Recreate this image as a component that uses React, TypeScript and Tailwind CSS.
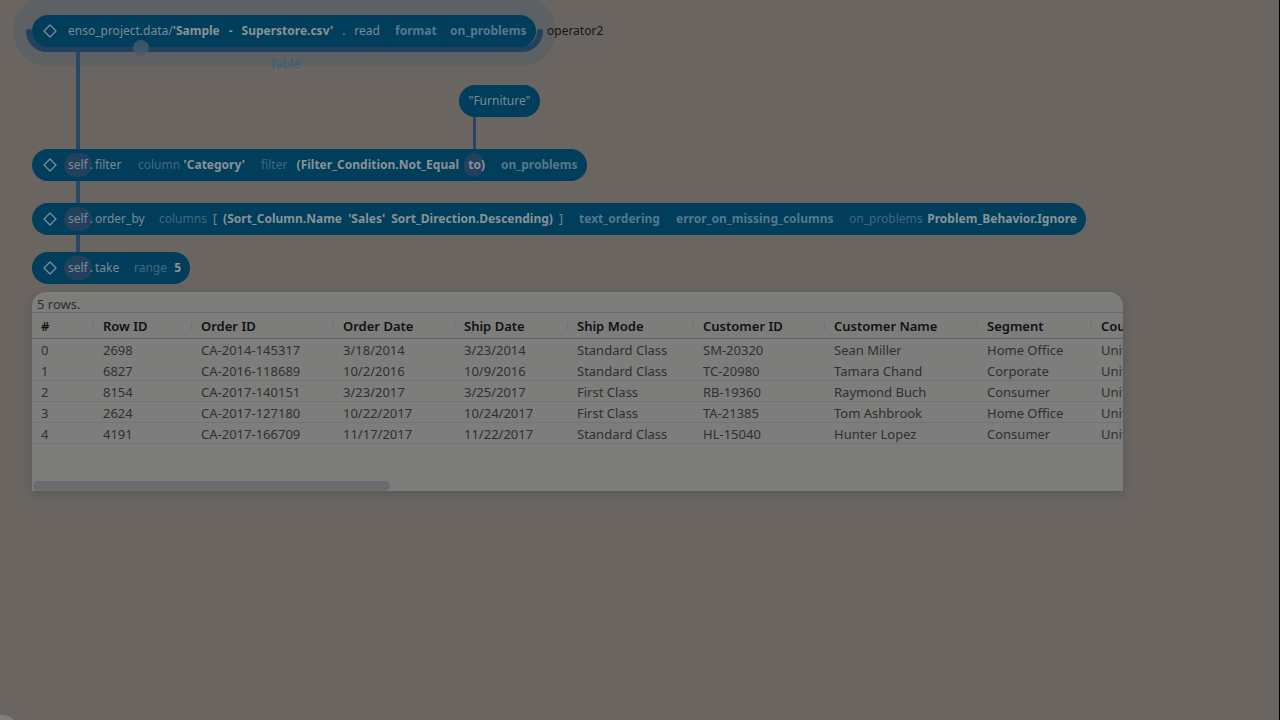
import type { ReactNode } from "react";

const columns = [
  { label: "#", width: "w-[62px]" },
  { label: "Row ID", width: "w-[98px]" },
  { label: "Order ID", width: "w-[142px]" },
  { label: "Order Date", width: "w-[121px]" },
  { label: "Ship Date", width: "w-[113px]" },
  { label: "Ship Mode", width: "w-[126px]" },
  { label: "Customer ID", width: "w-[131px]" },
  { label: "Customer Name", width: "w-[153px]" },
  { label: "Segment", width: "w-[114px]" },
  { label: "Country", width: "w-[120px]" },
];

const rows = [
  ["0", "2698", "CA-2014-145317", "3/18/2014", "3/23/2014", "Standard Class", "SM-20320", "Sean Miller", "Home Office", "United States"],
  ["1", "6827", "CA-2016-118689", "10/2/2016", "10/9/2016", "Standard Class", "TC-20980", "Tamara Chand", "Corporate", "United States"],
  ["2", "8154", "CA-2017-140151", "3/23/2017", "3/25/2017", "First Class", "RB-19360", "Raymond Buch", "Consumer", "United States"],
  ["3", "2624", "CA-2017-127180", "10/22/2017", "10/24/2017", "First Class", "TA-21385", "Tom Ashbrook", "Home Office", "United States"],
  ["4", "4191", "CA-2017-166709", "11/17/2017", "11/22/2017", "Standard Class", "HL-15040", "Hunter Lopez", "Consumer", "United States"],
];

function Diamond() {
  return (
    <svg viewBox="0 0 14 14" className="mr-[11px] size-[14px] shrink-0" fill="none" stroke="#7f8c91" strokeWidth="1.3" strokeLinejoin="round" aria-hidden="true">
      <path d="M7 1 13 7 7 13 1 7Z" />
    </svg>
  );
}

function Node({ place, children }: { place: string; children: ReactNode }) {
  return (
    <div className={`absolute flex h-8 items-center rounded-full bg-[#003e5c] pl-[11px] whitespace-nowrap text-[#7c8b92] ${place}`}>
      <Diamond />
      {children}
    </div>
  );
}

function Segment({ width, children }: { width: string; children: ReactNode }) {
  return <span className={`flex h-full shrink-0 items-center justify-between border-l border-[#003b58] pl-[7px] ${width}`}>{children}</span>;
}

function SelfCall({ method }: { method: string }) {
  return (
    <span className="flex flex-1 gap-0.5">
      <span className="relative">
        <span className="absolute -inset-x-1 top-1/2 h-6 -translate-y-1/2 rounded-full bg-[#23405f]" />
        <span className="relative">self</span>
      </span>
      <span className="relative">.</span>
      <span className="relative">{method}</span>
    </span>
  );
}

const dim = "text-[#43697c]";
const soft = "font-bold text-[#56788a]";
const strong = "font-bold text-[#8a9294]";

export default function App() {
  return (
    <main className="relative min-h-screen w-full overflow-hidden border-r border-black bg-[#6a6561] font-['Noto_Sans',sans-serif] text-[12px] leading-4">
      <div className="absolute top-[-4px] left-[13px] h-[70px] w-[543px] rounded-full bg-[#5e6163]" />
      <svg className="absolute top-2 left-[26px] h-[45px] w-[517px]" viewBox="0 0 517 45" fill="none" stroke="#23405f" strokeWidth="6" strokeLinecap="round" aria-hidden="true">
        <path d="M3 24a18 18 0 0 0 18 17H496a18 18 0 0 0 18-17" />
      </svg>
      <div className="absolute top-[52px] left-[76px] h-[210px] w-1 bg-[#2a4665]" />
      <div className="absolute top-[116px] left-[473px] h-[36px] w-[3px] bg-[#2a4665]" />

      <Node place="top-[15px] left-8 w-[504px]">
        <span className="flex flex-1 items-center justify-between pr-[7px]">
          <span>enso_project.data/<b className={strong}>'Sample</b></span>
          <b className={strong}>-</b>
          <b className={strong}>Superstore.csv'</b>
          <span>.</span>
          <span>read</span>
        </span>
        <Segment width="w-[55px]"><b className={soft}>format</b></Segment>
        <Segment width="w-[94px]"><b className={soft}>on_problems</b></Segment>
      </Node>
      <span className="absolute top-[23px] left-[547px] text-[#151515]">operator2</span>
      <span className="absolute top-14 left-[270px] text-[#365d7c]">Table</span>
      <span className="absolute top-10 left-[133px] size-4 rounded-full bg-[#4c5961]/80" />

      <div className="absolute top-[85px] left-[459px] flex h-8 w-[81px] items-center justify-center rounded-full bg-[#003e5c] text-[#7c8b92]">"Furniture"</div>

      <Node place="top-[149px] left-8 w-[555px]">
        <SelfCall method="filter" />
        <Segment width="w-[123px] pr-2"><span className={dim}>column</span><b className={strong}>'Category'</b></Segment>
        <Segment width="w-[240px] pr-2">
          <span className={dim}>filter</span>
          <b className={strong}>(Filter_Condition.Not_Equal</b>
          <b className={`relative ${strong}`}>
            <span className="absolute top-1/2 -left-1 h-6 w-5 -translate-y-1/2 rounded-full bg-[#23405f]" />
            <span className="relative">to)</span>
          </b>
        </Segment>
        <Segment width="w-[94px]"><b className={soft}>on_problems</b></Segment>
      </Node>

      <Node place="top-[203px] left-8 w-[1054px]">
        <SelfCall method="order_by" />
        <Segment width="w-[420px] pr-2">
          <span className={dim}>columns</span>
          <span>[</span>
          <b className={strong}>(Sort_Column.Name</b>
          <b className={strong}>'Sales'</b>
          <b className={strong}>Sort_Direction.Descending)</b>
          <span>]</span>
        </Segment>
        <Segment width="w-[97px]"><b className={soft}>text_ordering</b></Segment>
        <Segment width="w-[173px]"><b className={soft}>error_on_missing_columns</b></Segment>
        <Segment width="w-[245px] pr-[9px]"><span className={dim}>on_problems</span><b className={strong}>Problem_Behavior.Ignore</b></Segment>
      </Node>

      <Node place="top-[252px] left-8 w-[158px]">
        <SelfCall method="take" />
        <Segment width="w-[64px] pr-[9px]"><span className={dim}>range</span><b className={strong}>5</b></Segment>
      </Node>

      <section className="absolute top-[292px] left-8 h-[199px] w-[1091px] overflow-hidden rounded-t-[14px] bg-[#7d7d7b] shadow-[0_3px_8px_rgba(60,60,65,0.35)]">
        <p className="h-5 pt-1 pl-[5px] text-[13px] text-[#2c2d2e]">5 rows.</p>
        <table className="w-full table-fixed border-t border-[#68686c] text-left text-[13px] text-[#2f3032]">
          <thead>
            <tr className="h-[26px] border-b border-[#636367] text-[#111214]">
              {columns.map((c) => (
                <th key={c.label} scope="col" className={`p-0 font-semibold whitespace-nowrap ${c.width}`}>
                  <span className="flex items-center justify-between pl-[9px]">
                    {c.label}
                    <span className="h-2 w-px bg-[#6d6d73]" />
                  </span>
                </th>
              ))}
            </tr>
          </thead>
          <tbody>
            {rows.map((r) => (
              <tr key={r[0]} className="h-[21px] border-b border-[#747478] first:border-transparent">
                {r.map((v, i) => (
                  <td key={i} className="p-0 pt-0.5 pl-[9px] whitespace-nowrap">{v}</td>
                ))}
              </tr>
            ))}
          </tbody>
        </table>
        <div className="absolute bottom-0 left-px h-[10px] w-[357px] rounded-[5px] bg-[#6c6c70]" />
      </section>

      <div className="absolute -bottom-5 -left-6 h-[25px] w-10 rounded-full bg-[#817f7d]" />
    </main>
  );
}
